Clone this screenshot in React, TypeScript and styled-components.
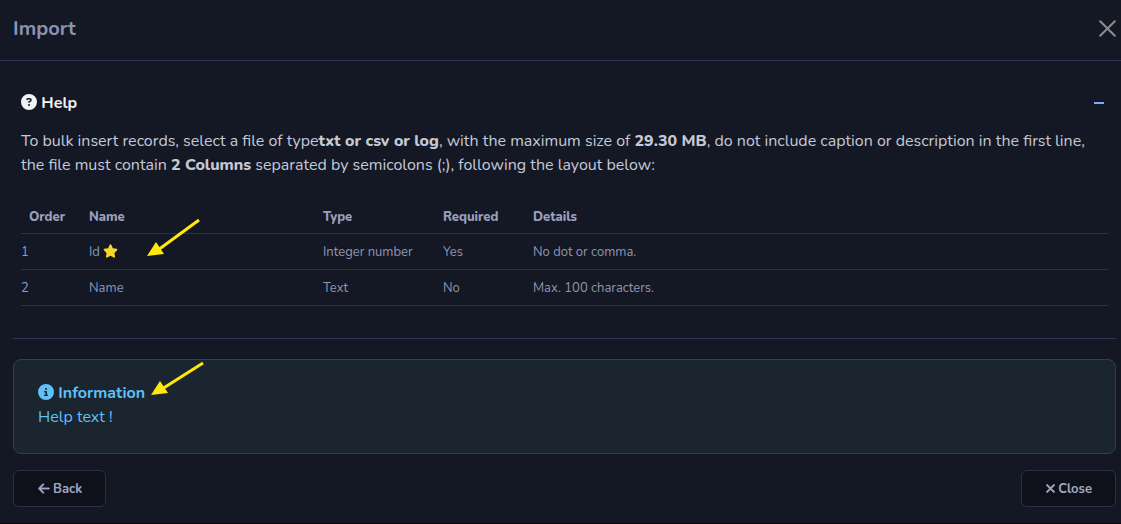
import React, { useState } from "react";
import styled, { createGlobalStyle } from "styled-components";
import { FaCircleQuestion, FaCircleInfo, FaStar, FaArrowLeft, FaXmark } from "react-icons/fa6";

const GlobalStyle = createGlobalStyle`
  *, *::before, *::after { box-sizing: border-box; }
  body {
    margin: 0;
    background: #050508;
    color: #c4c9d8;
    font-family: Nunito, Lato, "Noto Sans", sans-serif;
    font-size: 16px;
    line-height: 24px;
  }
`;

const Dialog = styled.main`
  background: #141824;
`;

const Header = styled.header`
  display: flex;
  align-items: center;
  justify-content: space-between;
  height: 61px;
  padding: 0 5px 3px 13px;
  border-bottom: 1px solid #323652;
`;

const Title = styled.h1`
  margin: 0;
  font-size: 20px;
  font-weight: 700;
  color: #8c91b2;
`;

const Dismiss = styled.button`
  display: flex;
  padding: 0;
  border: 0;
  background: none;
  color: #8b8c92;
  cursor: pointer;
`;

const Body = styled.div`
  padding: 30px 5px 16px 13px;
`;

const HelpSection = styled.section`
  padding: 0 8px 32px;
`;

const HelpToggle = styled.button`
  display: flex;
  align-items: center;
  justify-content: space-between;
  width: 100%;
  padding: 0 4px 0 0;
  border: 0;
  background: none;
  color: #f2f4fa;
  font: inherit;
  font-weight: 700;
  cursor: pointer;
`;

const IconLabel = styled.span`
  svg {
    vertical-align: -2px;
  }
`;

const Sign = styled.span<{ $open: boolean }>`
  width: 10px;
  height: ${(p) => (p.$open ? 2 : 10)}px;
  background: #86a6fb;
`;

const Description = styled.p`
  margin: 14px 0 20px;
`;

const Strong = styled.strong`
  font-weight: 800;
`;

const Table = styled.table`
  width: 100%;
  table-layout: fixed;
  border-collapse: collapse;
  font-size: 13px;
  line-height: 19px;
  color: #9095b1;
`;

const HeadCell = styled.th<{ $width?: string }>`
  width: ${(p) => p.$width ?? "auto"};
  padding: 11px 8px 6px;
  border-bottom: 1px solid #2d3147;
  text-align: left;
  font-weight: 800;
  color: #9ba0bc;
`;

const Cell = styled.td<{ $flush?: boolean; $accent?: boolean }>`
  padding: 9px 8px 7px ${(p) => (p.$flush ? 0 : 8)}px;
  border-bottom: 1px solid #2d3147;
  color: ${(p) => (p.$flush ? "#7f9fc8" : p.$accent ? "#8499bd" : "inherit")};
`;

const FieldName = styled.span`
  position: relative;
  display: block;
`;

const KeyStar = styled(FaStar)`
  width: 15px;
  height: 14px;
  color: #f3d72c;
  vertical-align: -2px;
`;

const Pointer = styled.svg<{ $left: number; $top: number }>`
  position: absolute;
  left: ${(p) => p.$left}px;
  top: ${(p) => p.$top}px;
  pointer-events: none;
`;

const Divider = styled.hr`
  margin: 0 0 20px;
  border: 0;
  border-top: 1px solid #323652;
`;

const InfoBox = styled.section`
  position: relative;
  padding: 21px 24px 24px;
  border: 1px solid #28435a;
  border-radius: 8px;
  background: #1b2530;
  color: #5fc0fa;
`;

const InfoTitle = styled.h2`
  margin: 0;
  font-size: inherit;
  font-weight: 700;
`;

const InfoText = styled.p`
  margin: 0;
`;

const Footer = styled.footer`
  display: flex;
  justify-content: space-between;
  margin-top: 16px;
`;

const FooterButton = styled.button`
  display: flex;
  align-items: center;
  gap: 3px;
  height: 37px;
  padding: 0 23px 0 24px;
  border: 1px solid #2d3047;
  border-radius: 6px;
  background: #0f111a;
  color: #a3a7c2;
  font: inherit;
  font-size: 13px;
  font-weight: 700;
  cursor: pointer;

  svg {
    stroke: currentColor;
    stroke-width: 12px;
  }
`;

const BackIcon = styled(FaArrowLeft)`
  width: 12px;
  height: 13px;
`;

const CloseIcon = styled(FaXmark)`
  width: 9px;
  height: 9px;
`;

const fields = [
  { order: 1, name: "Id", key: true, type: "Integer number", required: "Yes", details: "No dot or comma." },
  { order: 2, name: "Name", key: false, type: "Text", required: "No", details: "Max. 100 characters." },
];

function Arrow({ left, top, width, rise }: { left: number; top: number; width: number; rise: number }) {
  return (
    <Pointer $left={left} $top={top} width={width + 4} height={rise + 4} aria-hidden="true">
      <path d={`M11 ${rise - 6}L${width} 2`} stroke="#ffe80a" strokeWidth="3" fill="none" />
      <path d={`M0 ${rise}L9 ${rise - 14}L17 ${rise - 2}Z`} fill="#ffe80a" />
    </Pointer>
  );
}

export default function App() {
  const [open, setOpen] = useState(true);
  return (
    <>
      <GlobalStyle />
      <Dialog>
        <Header>
          <Title>Import</Title>
          <Dismiss type="button" aria-label="Dismiss">
            <svg width="17" height="17" viewBox="0 0 17 17" stroke="currentColor" strokeWidth="2" strokeLinecap="round">
              <path d="M1.2 1.2L15.8 15.8M15.8 1.2L1.2 15.8" />
            </svg>
          </Dismiss>
        </Header>
        <Body>
          <HelpSection>
            <HelpToggle type="button" aria-expanded={open} onClick={() => setOpen(!open)}>
              <IconLabel>
                <FaCircleQuestion size={16} /> Help
              </IconLabel>
              <Sign $open={open} />
            </HelpToggle>
            {open && (
              <>
                <Description>
                  To bulk insert records, select a file of type<Strong>txt or csv or log</Strong>, with the maximum
                  size of <Strong>29.30 MB</Strong>, do not include caption or description in the first line, the file
                  must contain <Strong>2 Columns</Strong> separated by semicolons (;), following the layout below:
                </Description>
                <Table>
                  <thead>
                    <tr>
                      <HeadCell $width="60px">Order</HeadCell>
                      <HeadCell $width="234px">Name</HeadCell>
                      <HeadCell $width="120px">Type</HeadCell>
                      <HeadCell $width="90px">Required</HeadCell>
                      <HeadCell>Details</HeadCell>
                    </tr>
                  </thead>
                  <tbody>
                    {fields.map((f) => (
                      <tr key={f.order}>
                        <Cell $flush>{f.order}</Cell>
                        <Cell $accent>
                          <FieldName>
                            {f.name} {f.key && <KeyStar />}
                            {f.key && <Arrow left={58} top={-25} width={52} rise={38} />}
                          </FieldName>
                        </Cell>
                        <Cell>{f.type}</Cell>
                        <Cell>{f.required}</Cell>
                        <Cell>{f.details}</Cell>
                      </tr>
                    ))}
                  </tbody>
                </Table>
              </>
            )}
          </HelpSection>
          <Divider />
          <InfoBox>
            <InfoTitle>
              <IconLabel>
                <FaCircleInfo size={16} /> Information
              </IconLabel>
            </InfoTitle>
            <InfoText>Help text !</InfoText>
            <Arrow left={137} top={1} width={52} rise={34} />
          </InfoBox>
          <Footer>
            <FooterButton type="button">
              <BackIcon />
              Back
            </FooterButton>
            <FooterButton type="button">
              <CloseIcon viewBox="24 88 336 336" />
              Close
            </FooterButton>
          </Footer>
        </Body>
      </Dialog>
    </>
  );
}
